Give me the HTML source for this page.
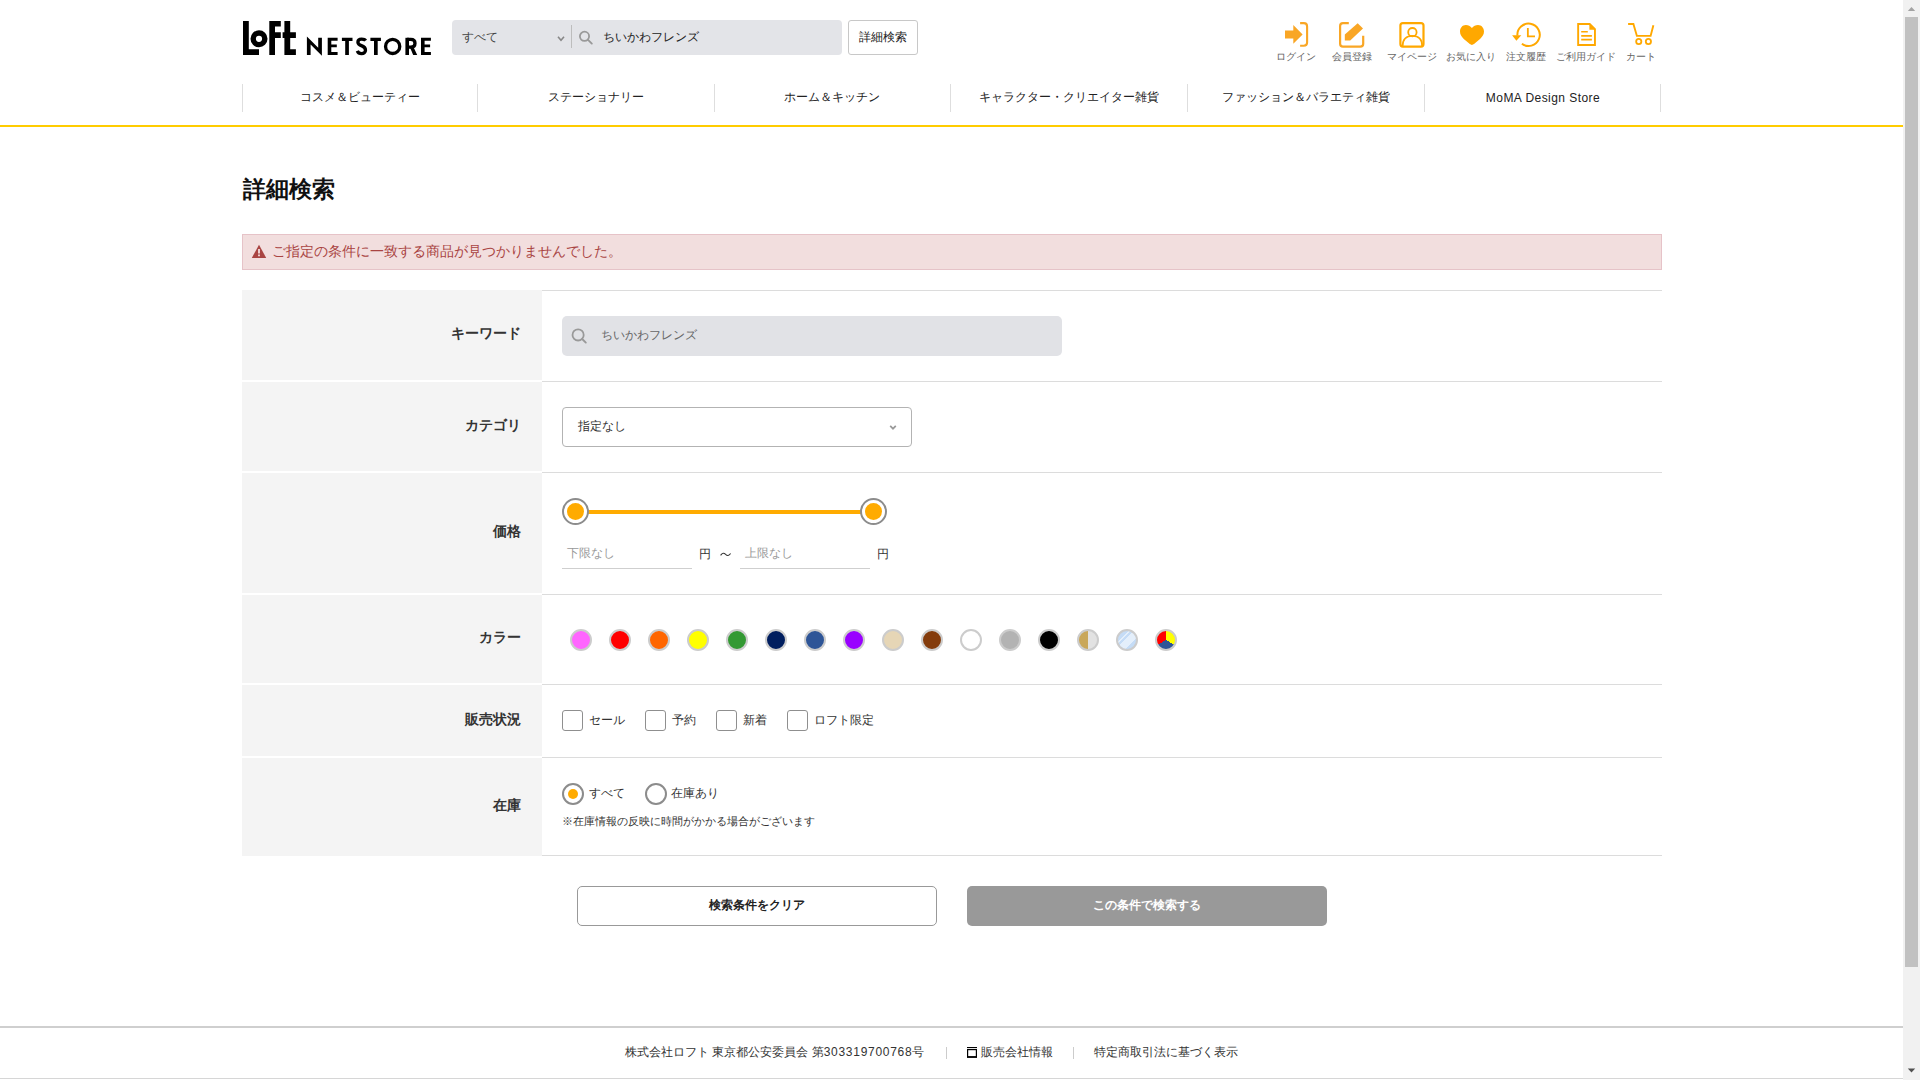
<!DOCTYPE html>
<html lang="ja">
<head>
<meta charset="utf-8">
<title>詳細検索 | ロフト公式通販サイト</title>
<style>
*{box-sizing:border-box;margin:0;padding:0}
html,body{width:1920px;height:1080px;overflow:hidden;background:#fff}
body{position:relative;font-family:"Liberation Sans",sans-serif;color:#333;font-size:12px}
.abs{position:absolute}
.t{position:absolute;white-space:nowrap;line-height:1}
/* scrollbar */
#sb{position:absolute;left:1903px;top:0;width:17px;height:1080px;background:#f1f1f1}
#sb .thumb{position:absolute;left:2px;top:17px;width:13px;height:950px;background:#c1c1c1}
/* header */
.srch{position:absolute;left:452px;top:20px;width:390px;height:35px;background:#e3e4e8;border-radius:4px}
.dbtn{position:absolute;left:848px;top:20px;width:70px;height:35px;border:1px solid #c8c8c8;border-radius:3px;background:#fff}
.lbl10{position:absolute;top:51px;font-size:10px;line-height:12px;color:#666;white-space:nowrap;transform:translateX(-50%)}
.nav .sep{position:absolute;top:84px;width:1px;height:28px;background:#dedede}
.nav .it{position:absolute;top:91px;font-size:12px;line-height:12px;color:#222;white-space:nowrap;transform:translateX(-50%)}
#yl{position:absolute;left:0;top:125px;width:1903px;height:2px;background:#ffcc00}
/* main */
h1{position:absolute;left:243px;top:178px;font-size:23px;line-height:23px;font-weight:bold;color:#111}
.alert{position:absolute;left:242px;top:234px;width:1420px;height:36px;background:#f2dede;border:1px solid #e6c3c8}
.row{position:absolute;left:242px;width:1420px}
.row .lab{position:absolute;left:0;top:0;width:300px;background:#f4f4f4}
.row .lab span{position:absolute;right:21px;font-size:14px;line-height:14px;font-weight:bold;color:#333;white-space:nowrap}
.row .bd{position:absolute;left:300px;right:0;height:1px;background:#dcdcdc}
.lab{position:absolute;right:1399px;font-size:14px;line-height:14px;font-weight:bold;color:#333;white-space:nowrap}
.handle{position:absolute;top:498px;width:27px;height:27px;border-radius:50%;border:2px solid #8c8c8c;background:#fff}
.handle:after{content:"";position:absolute;left:3px;top:3px;width:17px;height:17px;border-radius:50%;background:#ffab00}
.sw{position:absolute;top:629px;width:22px;height:22px;border-radius:50%;border:2px solid #cccccc}
.cb{position:absolute;top:710px;width:21px;height:21px;border:1px solid #8f8f8f;border-radius:3px;background:#fff}
.rd{position:absolute;top:783px;width:22px;height:22px;border:2px solid #8c8c8c;border-radius:50%;background:#fff}
.rd .dot{position:absolute;left:4px;top:4px;width:10px;height:10px;border-radius:50%;background:#ffab00}
</style>
</head>
<body>
<!-- ================= HEADER ================= -->
<svg class="abs" style="left:0;top:0" width="1903" height="70" viewBox="0 0 1903 70">
  <!-- LoFt -->
  <g fill="#000">
    <path d="M243 21H248.8V49.2H259V55H243Z"/>
    <circle cx="259" cy="38.8" r="5.8" fill="none" stroke="#000" stroke-width="5.4"/>
    <path d="M269.3 21H280.8V26.5H275V32.2H280.8V38H275V55H269.3Z"/>
    <path d="M284.4 21H290.2V32.2H295.9V38H290.2V49.2H295.9V55H284.4V38H282.6V32.2H284.4Z"/>
  </g>
  <!-- NETSTORE -->
  <g fill="#000">
    <path d="M306.9 36.4L318.2 47.7V37.8H321.9V55.7L310.6 44.6V55H306.9Z"/>
    <path d="M327.7 37.8H337.6V40.8H331.3V44.4H336.8V47.3H331.3V52H337.6V55H327.7Z"/>
    <path d="M341.9 37.8H352.5V40.9H348.9V55H345.2V40.9H341.9Z"/>
    <path d="M365.6 40.6C364.8 39.3 363.4 39.2 361.6 39.2C359.2 39.2 357.9 40.5 357.9 42.2C357.9 44.3 359.9 45.1 361.9 45.9C364.3 46.8 365.5 48.1 365.5 50.3C365.5 52.4 363.8 53.7 361.6 53.7C359.4 53.7 358 52.7 357.3 50.9" fill="none" stroke="#000" stroke-width="3.3"/>
    <path d="M370.4 37.8H380.9V40.9H377.7V55H374V40.9H370.4Z"/>
    <circle cx="392.65" cy="46.4" r="7.1" fill="none" stroke="#000" stroke-width="3.3"/>
    <path d="M405.4 37.8H409V55H405.4Z"/>
    <path d="M407 39.45H410.8C413.5 39.45 415 40.9 415 43.3C415 45.7 413.5 47.2 410.8 47.2H407" fill="none" stroke="#000" stroke-width="3.3"/>
    <path d="M410 47.5L413.2 46.5L417.2 55H413.2Z"/>
    <path d="M421 37.8H430.9V40.8H424.6V44.4H430.1V47.3H424.6V52H430.9V55H421Z"/>
  </g>
</svg>

<div class="srch">
  <span class="t" style="left:10px;top:11px;font-size:12px;line-height:12px;color:#444">すべて</span>
  <svg class="abs" style="left:104px;top:15px" width="10" height="8" viewBox="0 0 10 8"><path d="M2 1.8L5 5.2L8 1.8" fill="none" stroke="#888" stroke-width="1.6"/></svg>
  <div class="abs" style="left:119px;top:5px;width:1px;height:23px;background:#bdbdbd"></div>
  <svg class="abs" style="left:126px;top:10px" width="16" height="16" viewBox="0 0 16 16"><circle cx="6.5" cy="6.3" r="4.6" fill="none" stroke="#999" stroke-width="1.8"/><path d="M9.8 9.6L13.8 13.6" stroke="#999" stroke-width="1.9" stroke-linecap="round"/></svg>
  <span class="t" style="left:151px;top:11px;font-size:12px;line-height:12px;color:#222">ちいかわフレンズ</span>
</div>
<div class="dbtn"><span class="t" style="left:10px;top:10px;font-size:12px;line-height:12px;color:#222">詳細検索</span></div>

<!-- header icons -->
<svg class="abs" style="left:0;top:0" width="1903" height="70" viewBox="0 0 1903 70">
  <g fill="#f9a625" stroke="none">
    <!-- login -->
    <path d="M1285 30.4H1293.3V25L1302.6 34.4L1293.3 43.7V38.4H1285Z"/>
    <path d="M1300.1 23.1H1303.8Q1307.1 23.1 1307.1 26.4V42.6Q1307.1 45.8 1303.8 45.8H1300.1" fill="none" stroke="#f9a625" stroke-width="2.1"/>
    <!-- register -->
    <path d="M1348.8 23.1H1343Q1340.1 23.1 1340.1 26V43.7Q1340.1 46.6 1343 46.6H1360.3Q1363.2 46.6 1363.2 43.7V35.7" fill="none" stroke="#f9a625" stroke-width="2.2"/>
    <path d="M1344.8 34.4L1357.7 23.3L1363 28.6L1350.2 40.6H1344.8Z"/>
  </g>
  <g fill="none" stroke="#ffa800">
    <!-- mypage -->
    <rect x="1400.4" y="23.1" width="23.1" height="23.5" rx="2.5" stroke-width="2.2"/>
    <circle cx="1412.4" cy="32.2" r="4.2" stroke-width="1.8"/>
    <path d="M1402.6 46C1402.6 39.3 1406.6 35.9 1412.4 35.9C1418.2 35.9 1422.2 39.3 1422.2 46" stroke-width="1.8"/>
  </g>
  <g fill="#ffa800">
    <!-- heart -->
    <path d="M1471.9 28.1C1470.3 25.8 1468.3 24.9 1465.9 24.9C1462.3 24.9 1460 27.8 1460 31.5C1460 34.5 1461.6 36.8 1463.8 39L1469.8 44.1Q1471.9 45.7 1474 44.1L1480 39C1482.3 36.8 1484 34.5 1484 31.5C1484 27.8 1481.6 24.9 1478 24.9C1475.6 24.9 1473.5 25.8 1471.9 28.1Z"/>
    <!-- history -->
    <path d="M1521.9 43.8A11.2 11.2 0 1 0 1517.4 35.6" fill="none" stroke="#ffa800" stroke-width="2"/>
    <path d="M1512.1 35.2H1521.3L1516.4 40.8Z"/>
    <path d="M1527.85 28V36.4H1535" fill="none" stroke="#ffa800" stroke-width="1.8"/>
    <!-- guide -->
    <path d="M1578.15 24.05H1589.7L1594.95 29.2V44.95H1578.15Z" fill="none" stroke="#ffa800" stroke-width="1.9"/>
    <path d="M1589.4 23.6V29.7H1595.5Z"/>
    <path d="M1581.2 31.8H1587.8M1581.2 35.9H1591.9M1581.2 39.6H1591.9" fill="none" stroke="#ffa800" stroke-width="1.6"/>
    <!-- cart -->
    <path d="M1628.1 24H1633.4L1636.9 35.9H1650.6L1653.4 25.2" fill="none" stroke="#ffa800" stroke-width="1.9"/>
    <circle cx="1638.75" cy="41.5" r="2.6" fill="none" stroke="#ffa800" stroke-width="1.8"/>
    <circle cx="1648.4" cy="41.5" r="2.6" fill="none" stroke="#ffa800" stroke-width="1.8"/>
  </g>
</svg>
<span class="lbl10" style="left:1296px">ログイン</span>
<span class="lbl10" style="left:1352px">会員登録</span>
<span class="lbl10" style="left:1412px">マイページ</span>
<span class="lbl10" style="left:1471px">お気に入り</span>
<span class="lbl10" style="left:1526px">注文履歴</span>
<span class="lbl10" style="left:1586px">ご利用ガイド</span>
<span class="lbl10" style="left:1641px">カート</span>

<div class="nav">
  <div class="sep" style="left:242px"></div>
  <div class="sep" style="left:477px"></div>
  <div class="sep" style="left:714px"></div>
  <div class="sep" style="left:950px"></div>
  <div class="sep" style="left:1187px"></div>
  <div class="sep" style="left:1424px"></div>
  <div class="sep" style="left:1660px"></div>
  <span class="it" style="left:360px">コスメ＆ビューティー</span>
  <span class="it" style="left:596px">ステーショナリー</span>
  <span class="it" style="left:832px">ホーム＆キッチン</span>
  <span class="it" style="left:1069px">キャラクター・クリエイター雑貨</span>
  <span class="it" style="left:1306px">ファッション＆バラエティ雑貨</span>
  <span class="it" style="left:1543px;top:92px;letter-spacing:0.45px">MoMA Design Store</span>
</div>
<div id="yl"></div>

<h1>詳細検索</h1>
<div class="alert">
  <svg class="abs" style="left:8.4px;top:9px" width="16" height="15" viewBox="0 0 16 15"><path d="M8 0.8L15.2 13.9H0.8Z" fill="#a94442"/><path d="M7.1 5H8.9V9.6H7.1ZM7.1 10.6H8.9V12.3H7.1Z" fill="#f2dede"/></svg>
  <span class="t" style="left:29px;top:9px;font-size:14px;line-height:14px;color:#a94442">ご指定の条件に一致する商品が見つかりませんでした。</span>
</div>

<!-- table -->
<div class="abs" style="left:242px;top:290px;width:300px;height:90px;background:#f4f4f4"></div>
<div class="abs" style="left:242px;top:382px;width:300px;height:89px;background:#f4f4f4"></div>
<div class="abs" style="left:242px;top:473px;width:300px;height:120px;background:#f4f4f4"></div>
<div class="abs" style="left:242px;top:595px;width:300px;height:88px;background:#f4f4f4"></div>
<div class="abs" style="left:242px;top:685px;width:300px;height:71px;background:#f4f4f4"></div>
<div class="abs" style="left:242px;top:758px;width:300px;height:98px;background:#f4f4f4"></div>
<div class="abs" style="left:542px;top:290px;width:1120px;height:1px;background:#dcdcdc"></div>
<div class="abs" style="left:542px;top:381px;width:1120px;height:1px;background:#dcdcdc"></div>
<div class="abs" style="left:542px;top:472px;width:1120px;height:1px;background:#dcdcdc"></div>
<div class="abs" style="left:542px;top:594px;width:1120px;height:1px;background:#dcdcdc"></div>
<div class="abs" style="left:542px;top:684px;width:1120px;height:1px;background:#dcdcdc"></div>
<div class="abs" style="left:542px;top:757px;width:1120px;height:1px;background:#dcdcdc"></div>
<div class="abs" style="left:542px;top:855px;width:1120px;height:1px;background:#dcdcdc"></div>

<span class="lab" style="top:326px">キーワード</span>
<span class="lab" style="top:418px">カテゴリ</span>
<span class="lab" style="top:524px">価格</span>
<span class="lab" style="top:630px">カラー</span>
<span class="lab" style="top:712px">販売状況</span>
<span class="lab" style="top:798px">在庫</span>

<!-- keyword -->
<div class="abs" style="left:562px;top:316px;width:500px;height:40px;background:#e1e2e6;border-radius:5px">
  <svg class="abs" style="left:9px;top:10px" width="18" height="18" viewBox="0 0 18 18"><circle cx="7.1" cy="8.9" r="5.6" fill="none" stroke="#999" stroke-width="1.8"/><path d="M11.2 13L14.8 16.6" stroke="#999" stroke-width="1.9" stroke-linecap="round"/></svg>
  <span class="t" style="left:39px;top:13px;font-size:12px;line-height:12px;color:#666">ちいかわフレンズ</span>
</div>

<!-- category -->
<div class="abs" style="left:562px;top:407px;width:350px;height:40px;border:1px solid #b3b3b3;border-radius:4px;background:#fff">
  <span class="t" style="left:15px;top:12px;font-size:12px;line-height:12px;color:#333">指定なし</span>
  <svg class="abs" style="left:325px;top:16px" width="10" height="8" viewBox="0 0 10 8"><path d="M2.2 1.9L5 4.7L7.8 1.9" fill="none" stroke="#999" stroke-width="1.7"/></svg>
</div>

<!-- price -->
<div class="abs" style="left:588px;top:510px;width:273px;height:4px;background:#ffab00"></div>
<div class="handle" style="left:562px"></div>
<div class="handle" style="left:860px"></div>
<div class="abs" style="left:562px;top:568px;width:130px;height:1px;background:#cfcfcf"></div>
<div class="abs" style="left:740px;top:568px;width:130px;height:1px;background:#cfcfcf"></div>
<span class="t" style="left:567px;top:547px;font-size:12px;line-height:12px;color:#999">下限なし</span>
<span class="t" style="left:745px;top:547px;font-size:12px;line-height:12px;color:#999">上限なし</span>
<span class="t" style="left:699px;top:548px;font-size:12px;line-height:12px;color:#333">円</span>
<svg class="abs" style="left:0;top:0;overflow:visible" width="1" height="1"><path d="M720.6 555.4C722.4 552.6 724 552.7 725.6 554.4C727.2 556 728.8 556.1 730.6 553.5" fill="none" stroke="#333" stroke-width="1.1"/></svg>
<span class="t" style="left:877px;top:548px;font-size:12px;line-height:12px;color:#333">円</span>

<!-- colors -->
<div class="sw" style="left:570px;background:#ff66ff"></div>
<div class="sw" style="left:609px;background:#ff0000"></div>
<div class="sw" style="left:648px;background:#ff6600"></div>
<div class="sw" style="left:687px;background:#ffff00"></div>
<div class="sw" style="left:726px;background:#339933"></div>
<div class="sw" style="left:765px;background:#001e5f"></div>
<div class="sw" style="left:804px;background:#2e5597"></div>
<div class="sw" style="left:843px;background:#9900ff"></div>
<div class="sw" style="left:882px;background:#e6d6b6"></div>
<div class="sw" style="left:921px;background:#843c0c"></div>
<div class="sw" style="left:960px;background:#ffffff"></div>
<div class="sw" style="left:999px;background:#b3b3b3"></div>
<div class="sw" style="left:1038px;background:#000000"></div>
<div class="sw" style="left:1077px;background:linear-gradient(90deg,#c9a75a 50%,#e2e2e2 50%)"></div>
<div class="sw" style="left:1116px;background:linear-gradient(135deg,#c5dcf6 0%,#c5dcf6 30%,#e4effb 30%,#e4effb 36%,#c5dcf6 36%,#c5dcf6 42%,#e4effb 42%,#e4effb 70%,#c5dcf6 70%)"></div>
<div class="sw" style="left:1155px;background:conic-gradient(#ffff00 0deg 120deg,#2e5597 120deg 240deg,#ff0000 240deg 360deg)"></div>

<!-- sale status -->
<div class="cb" style="left:562px"></div><span class="t" style="left:589px;top:714px;font-size:12px;line-height:12px;color:#333">セール</span>
<div class="cb" style="left:645px"></div><span class="t" style="left:672px;top:714px;font-size:12px;line-height:12px;color:#333">予約</span>
<div class="cb" style="left:716px"></div><span class="t" style="left:743px;top:714px;font-size:12px;line-height:12px;color:#333">新着</span>
<div class="cb" style="left:787px"></div><span class="t" style="left:814px;top:714px;font-size:12px;line-height:12px;color:#333">ロフト限定</span>

<!-- stock -->
<div class="rd" style="left:562px"><div class="dot"></div></div><span class="t" style="left:589px;top:787px;font-size:12px;line-height:12px;color:#333">すべて</span>
<div class="rd" style="left:645px"></div><span class="t" style="left:671px;top:787px;font-size:12px;line-height:12px;color:#333">在庫あり</span>
<span class="t" style="left:562px;top:816px;font-size:11px;line-height:11px;color:#333">※在庫情報の反映に時間がかかる場合がございます</span>

<!-- buttons -->
<div class="abs" style="left:577px;top:886px;width:360px;height:40px;border:1px solid #999;border-radius:5px;background:#fff"></div>
<span class="t" style="left:757px;top:899px;transform:translateX(-50%);font-size:12px;line-height:12px;font-weight:bold;color:#222">検索条件をクリア</span>
<div class="abs" style="left:967px;top:886px;width:360px;height:40px;border-radius:5px;background:#999"></div>
<span class="t" style="left:1147px;top:899px;transform:translateX(-50%);font-size:12px;line-height:12px;font-weight:bold;color:#fff">この条件で検索する</span>

<!-- footer -->
<div class="abs" style="left:0;top:1026px;width:1903px;height:2px;background:#cfcfcf"></div>
<span class="t" style="left:625px;top:1046px;font-size:12px;line-height:12px;color:#333">株式会社ロフト 東京都公安委員会 第<span style="letter-spacing:0.72px">303319700768</span>号</span>
<div class="abs" style="left:946px;top:1047px;width:1px;height:12px;background:#ccc"></div>
<svg class="abs" style="left:966px;top:1046px" width="12" height="13" viewBox="0 0 12 13"><rect x="1" y="1" width="10" height="1.1" fill="#000"/><rect x="1.6" y="3.6" width="8.8" height="7.4" fill="none" stroke="#000" stroke-width="1.2"/><rect x="1" y="10.2" width="10" height="1.6" fill="#000"/></svg>
<span class="t" style="left:981px;top:1046px;font-size:12px;line-height:12px;color:#333">販売会社情報</span>
<div class="abs" style="left:1073px;top:1047px;width:1px;height:12px;background:#ccc"></div>
<span class="t" style="left:1094px;top:1046px;font-size:12px;line-height:12px;color:#333">特定商取引法に基づく表示</span>
<div class="abs" style="left:0;top:1078px;width:1903px;height:1px;background:#d6d6d6"></div>


<div id="sb">
  <svg class="abs" style="left:0;top:0" width="17" height="17" viewBox="0 0 17 17"><path d="M4.8 11L8.5 7.1L12.2 11Z" fill="#a3a3a3"/></svg>
  <div class="thumb"></div>
  <svg class="abs" style="left:0;top:1063px" width="17" height="17" viewBox="0 0 17 17"><path d="M4.8 5.6L8.5 9.6L12.2 5.6Z" fill="#505050"/></svg>
</div>
</body>
</html>
